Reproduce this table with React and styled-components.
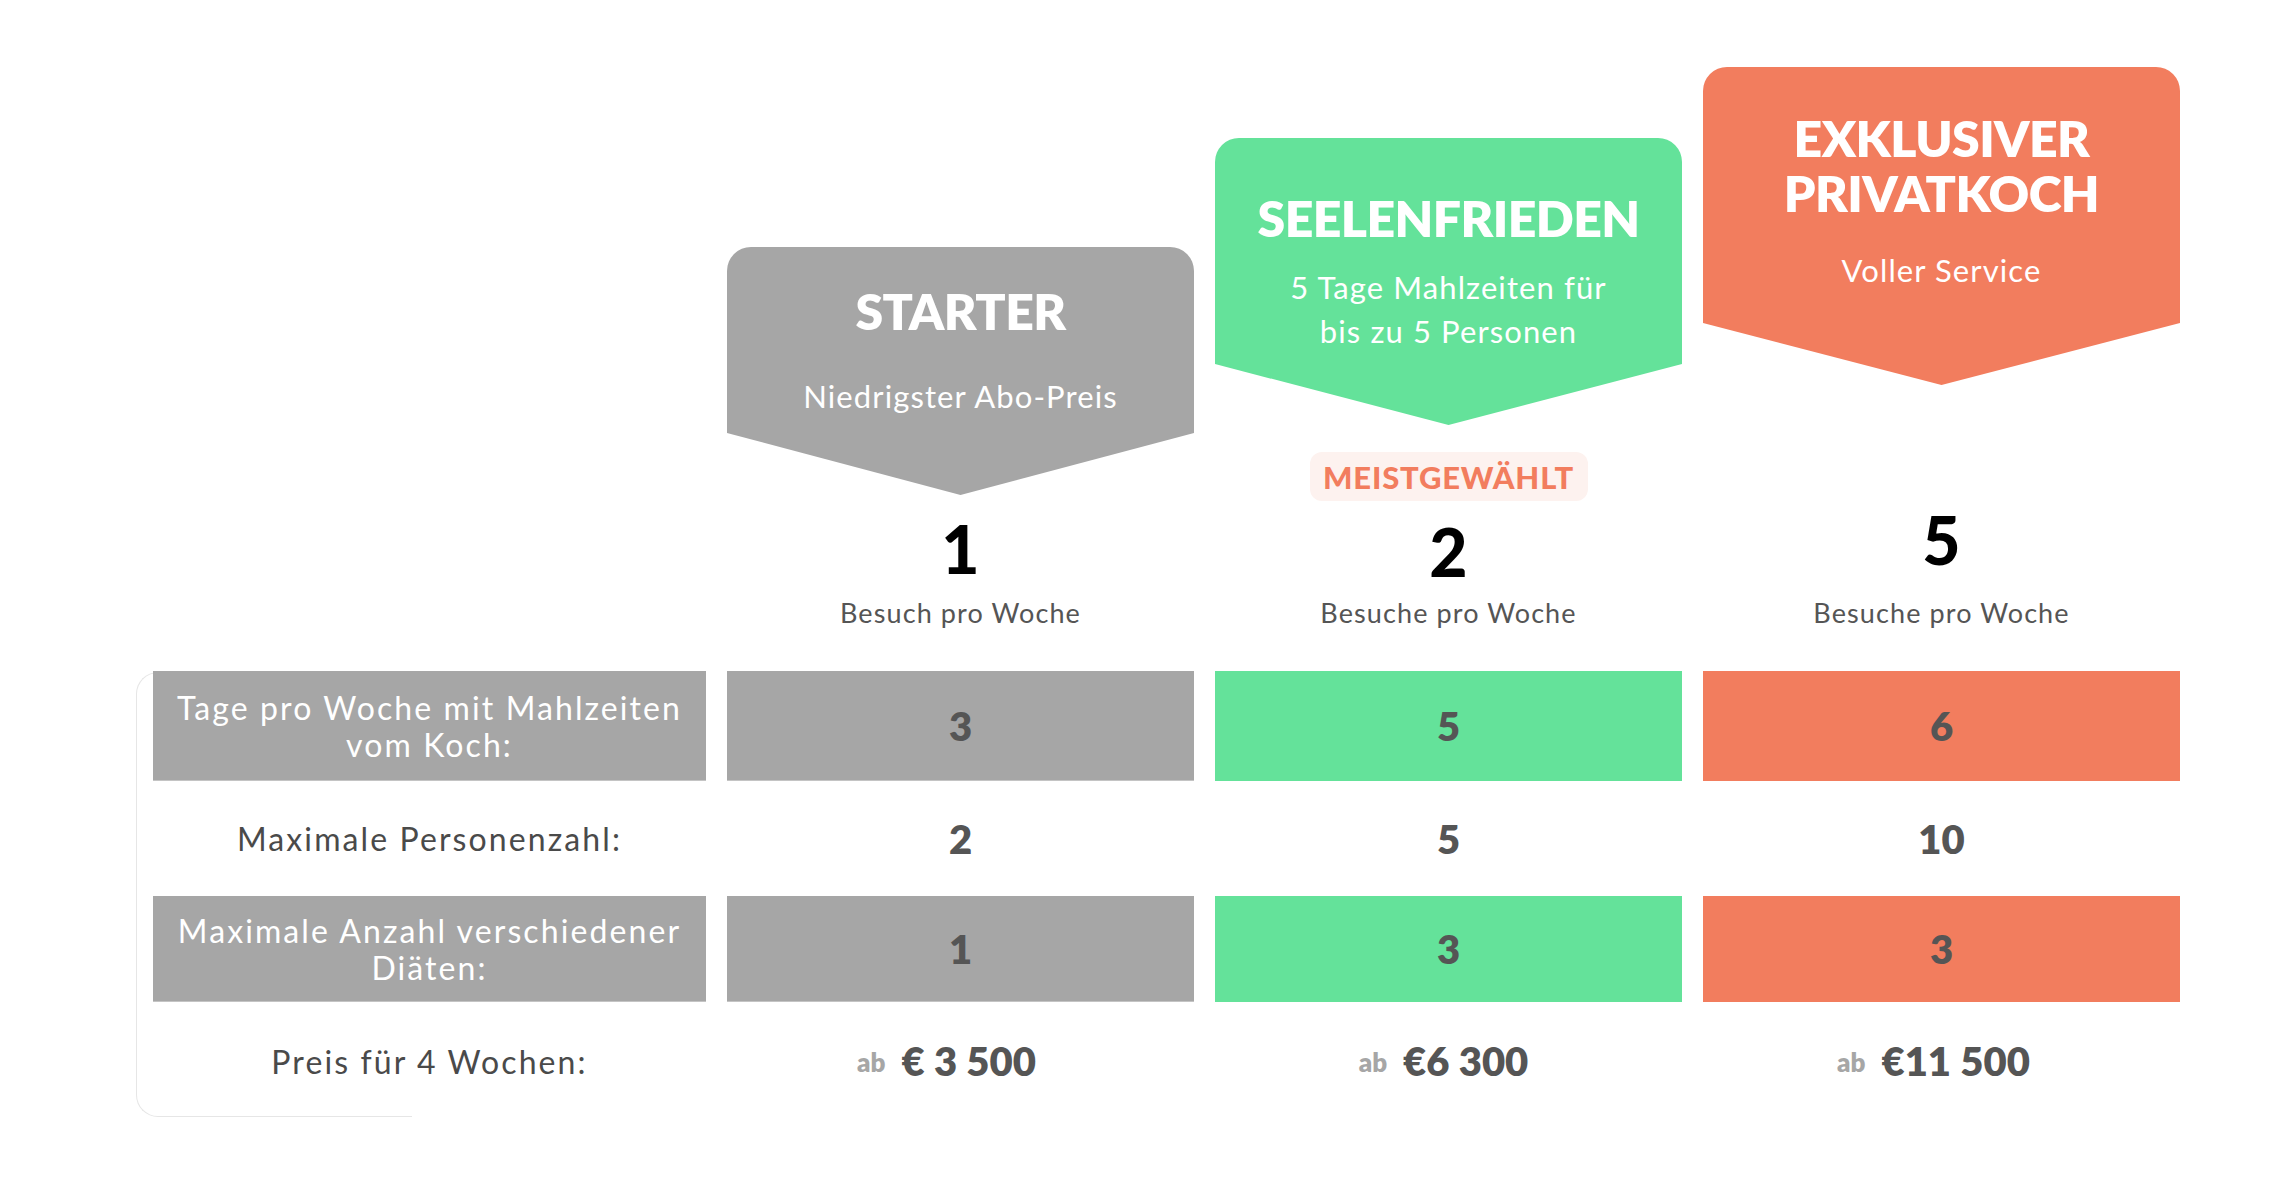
import React from 'react'
import styled, { createGlobalStyle } from 'styled-components'

const tones = {
  gray: '#a6a6a6',
  green: '#64e29a',
  orange: '#f27d5e',
}

const GlobalStyle = createGlobalStyle`
  body {
    margin: 0;
    background: #fff;
    font-family: Lato, 'Open Sans', sans-serif;
  }
`

const Page = styled.div`
  padding: 67px 0 40px 153px;
`

const Columns = styled.div`
  display: grid;
  grid-template-columns: 553px 467px 467px 477px;
  column-gap: 21px;
`

const Header = styled(Columns)`
  align-items: end;
`

const PlanHead = styled.div`
  display: flex;
  flex-direction: column;
  align-items: center;
`

const Card = styled.div`
  box-sizing: border-box;
  width: 100%;
  height: ${p => p.$h}px;
  padding-top: ${p => p.$pad}px;
  margin-bottom: ${p => p.$after}px;
  background: ${p => tones[p.$tone]};
  border-radius: 24px 24px 0 0;
  clip-path: polygon(
    0 0,
    100% 0,
    100% calc(100% - ${p => p.$tip}px),
    50% 100%,
    0 calc(100% - ${p => p.$tip}px)
  );
  display: flex;
  flex-direction: column;
  align-items: center;
  text-align: center;
  color: #fff;
`

const Title = styled.div`
  font-size: 50px;
  line-height: 55px;
  font-weight: 800;
  letter-spacing: -0.6px;
  margin-bottom: ${p => p.$gap}px;
`

const Subtitle = styled.div`
  font-size: 31px;
  line-height: 44px;
  font-weight: 400;
  letter-spacing: 1.1px;
`

const Badge = styled.div`
  box-sizing: border-box;
  width: 278px;
  height: 49px;
  margin-bottom: 27px;
  display: flex;
  align-items: center;
  justify-content: center;
  background: #fdf2ef;
  border-radius: 12px;
  color: #f27d5e;
  font-size: 31px;
  font-weight: 900;
  letter-spacing: 0.8px;
`

const Visits = styled.div`
  font-size: 66px;
  line-height: 48px;
  font-weight: 900;
  color: #000;
  margin-bottom: ${p => p.$after}px;
`

const VisitsCaption = styled.div`
  font-size: 27px;
  line-height: 32px;
  color: #555;
  letter-spacing: 1.1px;
`

const Table = styled.div`
  position: relative;
  z-index: 0;
  margin-top: 42px;

  &::before {
    content: '';
    position: absolute;
    z-index: -1;
    left: -17px;
    top: 1px;
    bottom: 3px;
    width: 275px;
    border: 1.5px solid #e6e6e6;
    border-right: none;
    border-radius: 22px 0 0 22px;
  }
`

const Rows = styled(Columns)`
  grid-template-rows: 110px 115px 106px 118px;
`

const Label = styled.div`
  display: flex;
  align-items: center;
  justify-content: center;
  text-align: center;
  padding: 0 4px;
  font-size: 32px;
  line-height: 37px;
  letter-spacing: 2.1px;
  background: ${p => (p.$filled ? tones.gray : 'transparent')};
  border-bottom: ${p => (p.$filled ? '1px solid #c4c4c4' : 'none')};
  color: ${p => (p.$filled ? '#fff' : '#4a4a4a')};
`

const Value = styled.div`
  display: flex;
  align-items: center;
  justify-content: center;
  font-size: 40px;
  font-weight: 800;
  color: #555;
  background: ${p => (p.$tone ? tones[p.$tone] : 'transparent')};
  border-bottom: ${p => (p.$tone === 'gray' ? '1px solid #c4c4c4' : 'none')};
`

const Price = styled.div`
  align-self: center;
  display: flex;
  align-items: baseline;
  justify-content: center;
  gap: 16px;
  padding-right: ${p => p.$shift}px;
  color: #555;
`

const From = styled.span`
  font-size: 26px;
  font-weight: 800;
  color: #a6a6a6;
  position: relative;
  top: -4px;
`

const Amount = styled.span`
  font-size: 40px;
  font-weight: 800;
`

const plans = [
  {
    tone: 'gray',
    title: ['STARTER'],
    sub: ['Niedrigster Abo-Preis'],
    card: { h: 248, tip: 62, pad: 37, after: 30, gap: 35 },
    visits: '1',
    caption: 'Besuch pro Woche',
    visitsAfter: 24,
    days: '3',
    people: '2',
    diets: '1',
    price: '€ 3 500',
    shift: 28,
  },
  {
    tone: 'green',
    title: ['SEELENFRIEDEN'],
    sub: ['5 Tage Mahlzeiten für', 'bis zu 5 Personen'],
    card: { h: 287, tip: 61, pad: 53, after: 27, gap: 19 },
    badge: 'MEISTGEWÄHLT',
    visits: '2',
    caption: 'Besuche pro Woche',
    visitsAfter: 21,
    days: '5',
    people: '5',
    diets: '3',
    price: '€6 300',
    shift: 10,
  },
  {
    tone: 'orange',
    title: ['EXKLUSIVER', 'PRIVATKOCH'],
    sub: ['Voller Service'],
    card: { h: 318, tip: 62, pad: 44, after: 131, gap: 27 },
    visits: '5',
    caption: 'Besuche pro Woche',
    visitsAfter: 33,
    days: '6',
    people: '10',
    diets: '3',
    price: '€11 500',
    shift: 16,
  },
]

export default function App() {
  return (
    <Page>
      <GlobalStyle />
      <Header>
        <div />
        {plans.map(plan => (
          <PlanHead key={plan.tone}>
            <Card
              $tone={plan.tone}
              $h={plan.card.h}
              $tip={plan.card.tip}
              $pad={plan.card.pad}
              $after={plan.card.after}
            >
              <Title $gap={plan.card.gap}>
                {plan.title.map(line => (
                  <div key={line}>{line}</div>
                ))}
              </Title>
              {plan.sub.map(line => (
                <Subtitle key={line}>{line}</Subtitle>
              ))}
            </Card>
            {plan.badge && <Badge>{plan.badge}</Badge>}
            <Visits $after={plan.visitsAfter}>{plan.visits}</Visits>
            <VisitsCaption>{plan.caption}</VisitsCaption>
          </PlanHead>
        ))}
      </Header>

      <Table>
        <Rows>
          <Label $filled>
            Tage pro Woche mit Mahlzeiten
            <br />
            vom Koch:
          </Label>
          {plans.map(plan => (
            <Value key={plan.tone} $tone={plan.tone}>
              {plan.days}
            </Value>
          ))}

          <Label>Maximale Personenzahl:</Label>
          {plans.map(plan => (
            <Value key={plan.tone}>{plan.people}</Value>
          ))}

          <Label $filled>
            Maximale Anzahl verschiedener
            <br />
            Diäten:
          </Label>
          {plans.map(plan => (
            <Value key={plan.tone} $tone={plan.tone}>
              {plan.diets}
            </Value>
          ))}

          <Label>Preis für 4 Wochen:</Label>
          {plans.map(plan => (
            <Price key={plan.tone} $shift={plan.shift}>
              <From>ab</From>
              <Amount>{plan.price}</Amount>
            </Price>
          ))}
        </Rows>
      </Table>
    </Page>
  )
}
